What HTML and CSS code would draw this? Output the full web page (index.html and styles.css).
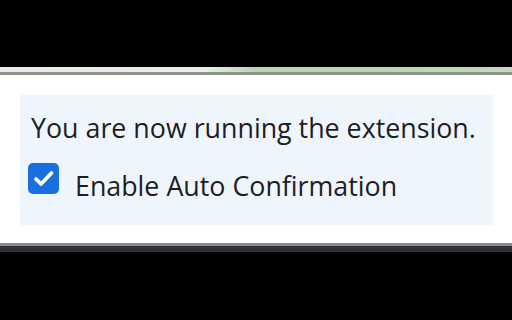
FILE: index.html
```html
<!DOCTYPE html>
<html lang="en">
<head>
  <meta charset="UTF-8">
  <title>Auto Confirmation</title>
  <link rel="stylesheet" href="styles.css">
</head>
<body>
  <div class="top-black"></div>
  <div class="frame-top"></div>
  <div class="popup">
    <div class="panel">
      <p class="status">You are now running the extension.</p>
      <label class="option">
        <span class="check">
          <svg viewBox="0 0 31 31" width="31" height="31">
            <rect x="0" y="0" width="31" height="31" rx="5" fill="#1a6fe0"/>
            <path d="M8 16 L13 21 L23.5 10" fill="none" stroke="#fff" stroke-width="3.8" stroke-linecap="round" stroke-linejoin="round"/>
          </svg>
        </span>
        <span>Enable Auto Confirmation</span>
      </label>
    </div>
  </div>
  <div class="frame-bottom"></div>
</body>
</html>
```

FILE: styles.css
```css
html, body {
  margin: 0;
  padding: 0;
  background: #000;
  height: 320px;
  overflow: hidden;
}
body {
  font-family: "Open Sans", "Noto Sans", sans-serif;
}
.top-black {
  height: 67px;
}
.frame-top {
  height: 5px;
  background: linear-gradient(to right, #e6ece4 0%, #e8efe6 40%, #b9d4b3 50%, #bcd8b5 90%, #c9d8c4 100%);
  border-bottom: 3px solid #8e938d;
}
.popup {
  background: #fff;
  padding: 20px 19px 18px 20px;
}
.panel {
  background: #eef5fd;
  padding: 14px 11px 12px 11px;
  height: 104px;
}
.status {
  margin: 0;
  font-size: 26.8px;
  color: #1e1e1e;
  line-height: 38px;
}
.option {
  display: flex;
  align-items: flex-start;
  gap: 16px;
  margin-top: 20px;
  font-size: 26.8px;
  line-height: 38px;
  color: #1e1e1e;
}
.check {
  display: block;
  width: 31px;
  height: 31px;
  margin-left: -3px;
  margin-top: -4px;
}
.check svg {
  display: block;
}
.frame-bottom {
  height: 6px;
  background: #2e3236;
  border-top: 3px solid #8a8d90;
}
```
